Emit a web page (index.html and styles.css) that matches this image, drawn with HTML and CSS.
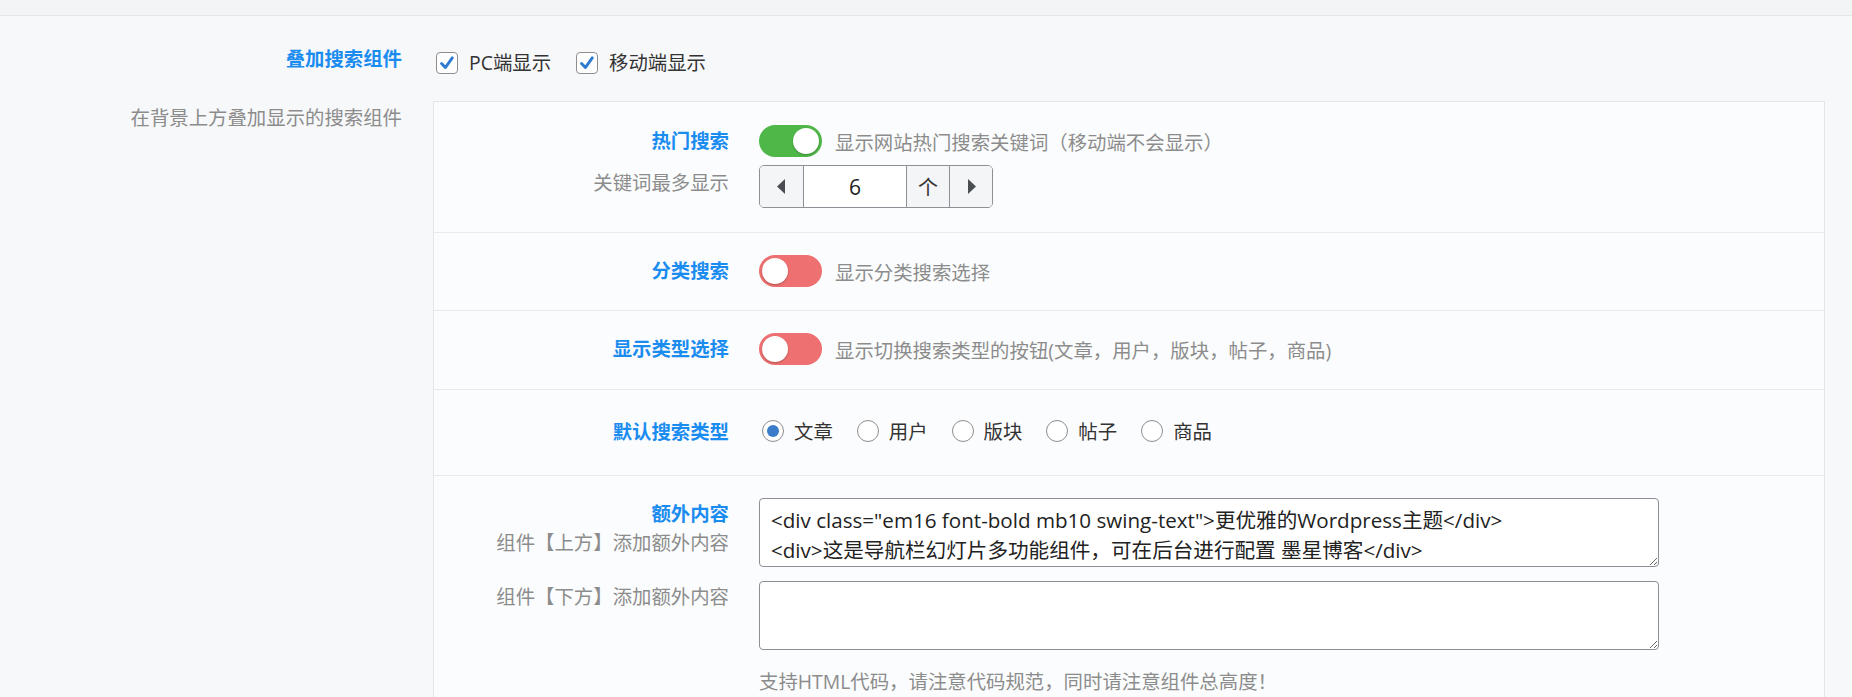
FILE: index.html
```html
<!DOCTYPE html>
<html lang="zh-CN">
<head>
<meta charset="utf-8">
<title>叠加搜索组件</title>
<link rel="stylesheet" href="styles.css">
</head>
<body>
<div class="topbar"></div>
<div class="field">
  <div class="field-title">
    <h4 class="title">叠加搜索组件</h4>
    <div class="subtitle">在背景上方叠加显示的搜索组件</div>
  </div>
  <div class="field-content">
    <div class="checks">
      <label class="check"><span class="cbox"><svg viewBox="0 0 22 22" width="22" height="22"><path d="M5 11.6 L9.2 16 L16.8 5.4" fill="none" stroke="#2f7bd1" stroke-width="3.2" stroke-linecap="round" stroke-linejoin="round"/></svg></span>PC端显示</label>
      <label class="check"><span class="cbox"><svg viewBox="0 0 22 22" width="22" height="22"><path d="M5 11.6 L9.2 16 L16.8 5.4" fill="none" stroke="#2f7bd1" stroke-width="3.2" stroke-linecap="round" stroke-linejoin="round"/></svg></span>移动端显示</label>
    </div>
    <div class="panel">
      <div class="row r1">
        <div class="rlabel"><h5 class="title">热门搜索</h5></div>
        <div class="rcontent line"><span class="switch on"><span class="knob"></span></span><span class="desc">显示网站热门搜索关键词（移动端不会显示）</span></div>
        <div class="rlabel"><div class="sublabel tall">关键词最多显示</div></div>
        <div class="rcontent">
          <div class="spinner">
            <span class="sbtn"><svg width="9" height="15" viewBox="0 0 9 15"><polygon points="8,0 8,15 0,7.5" fill="#4a4e53"/></svg></span>
            <span class="sval">6</span>
            <span class="sunit">个</span>
            <span class="sbtn last"><svg width="9" height="15" viewBox="0 0 9 15"><polygon points="1,0 1,15 9,7.5" fill="#4a4e53"/></svg></span>
          </div>
        </div>
      </div>
      <div class="row r2">
        <div class="rlabel"><h5 class="title">分类搜索</h5></div>
        <div class="rcontent line"><span class="switch off"><span class="knob"></span></span><span class="desc">显示分类搜索选择</span></div>
      </div>
      <div class="row r3">
        <div class="rlabel"><h5 class="title">显示类型选择</h5></div>
        <div class="rcontent line"><span class="switch off"><span class="knob"></span></span><span class="desc">显示切换搜索类型的按钮(文章，用户，版块，帖子，商品)</span></div>
      </div>
      <div class="row r4">
        <div class="rlabel"><h5 class="title radio-title">默认搜索类型</h5></div>
        <div class="rcontent radios">
          <label class="radio"><span class="rcircle checked"></span>文章</label>
          <label class="radio"><span class="rcircle"></span>用户</label>
          <label class="radio"><span class="rcircle"></span>版块</label>
          <label class="radio"><span class="rcircle"></span>帖子</label>
          <label class="radio"><span class="rcircle"></span>商品</label>
        </div>
      </div>
      <div class="row r5">
        <div class="rlabel">
          <h5 class="title">额外内容</h5>
          <div class="sublabel">组件【上方】添加额外内容</div>
        </div>
        <div class="rcontent">
          <textarea class="ta" spellcheck="false">&lt;div class="em16 font-bold mb10 swing-text"&gt;更优雅的Wordpress主题&lt;/div&gt;
&lt;div&gt;这是导航栏幻灯片多功能组件，可在后台进行配置 墨星博客&lt;/div&gt;</textarea>
        </div>
        <div class="rlabel"><div class="sublabel first">组件【下方】添加额外内容</div></div>
        <div class="rcontent">
          <textarea class="ta" spellcheck="false"></textarea>
          <div class="help">支持HTML代码，请注意代码规范，同时请注意组件总高度！</div>
        </div>
      </div>
    </div>
  </div>
</div>
</body>
</html>
```

FILE: styles.css
```css
* { box-sizing: border-box; }
html, body { margin: 0; padding: 0; }
body {
  background: #f7f8fa;
  font-family: "Open Sans", "Noto Sans CJK SC", sans-serif;
  font-size: 19.4px;
  color: #333;
  height: 697px;
  overflow: hidden;
}
.topbar {
  height: 16px;
  background: #f3f4f6;
  border-bottom: 1px solid #e4e6ea;
}
.field {
  display: grid;
  grid-template-columns: 402px 1fr;
  column-gap: 31px;
  padding: 28px 27px 0 0;
}
.field-title { text-align: right; }
.title {
  margin: 0;
  font-size: 19.4px;
  line-height: 30px;
  font-weight: bold;
  color: #1a8cf0;
}
.subtitle {
  margin-top: 29px;
  line-height: 30px;
  color: #8c8c8c;
}
.checks {
  display: flex;
  gap: 25px;
  margin-top: 4px;
  height: 30px;
  align-items: center;
}
.check {
  display: flex;
  align-items: center;
  gap: 11px;
  color: #333;
  line-height: 30px;
  margin-left: 3px;
}
.check + .check { margin-left: 0; }
.cbox {
  width: 22px;
  height: 22px;
  border: 1px solid #8e8e8e;
  border-radius: 4px;
  background: #fff;
  display: flex;
  align-items: center;
  justify-content: center;
}
.cbox svg { display: block; }
.panel {
  margin-top: 23px;
  background: #fbfcfd;
  border: 1px solid #e3e5e9;
  min-height: 700px;
}
.row {
  display: grid;
  grid-template-columns: 295px 1fr;
  column-gap: 30px;
  row-gap: 8px;
  padding: 22px 0 23px;
  border-top: 1px solid #e8eaed;
}
.row.r1 { border-top: none; padding-top: 23px; padding-bottom: 24px; }
.row.r3 { padding-bottom: 24px; }
.rlabel { text-align: right; }
.rlabel .title { line-height: 32px; }
.rlabel .radio-title { line-height: 40px; }
.sublabel {
  color: #8c8c8c;
  line-height: 26px;
}
.sublabel.tall { line-height: 36px; }
.sublabel.first { line-height: 32px; }
.line {
  display: flex;
  align-items: center;
  gap: 13px;
  height: 32px;
}
.desc { color: #8c8c8c; }
.switch {
  position: relative;
  display: inline-block;
  width: 63px;
  height: 32px;
  border-radius: 16px;
  flex: none;
}
.switch.on { background: #4fb748; }
.switch.off { background: #ee7070; }
.knob {
  position: absolute;
  top: 3px;
  width: 26px;
  height: 26px;
  border-radius: 50%;
  background: #fff;
  box-shadow: 0 1px 2px rgba(0,0,0,0.25);
}
.switch.on .knob { right: 3px; }
.switch.off .knob { left: 3px; }
.spinner {
  display: inline-flex;
  height: 43px;
  border: 1px solid #8d9096;
  border-radius: 5px;
  overflow: hidden;
  background: #fff;
  font-size: 21px;
}
.sbtn {
  width: 44px;
  display: flex;
  align-items: center;
  justify-content: center;
  background: #f4f5f6;
  border-right: 1px solid #8d9096;
}
.sbtn.last { border-right: none; width: 42px; }
.sval {
  width: 103px;
  display: flex;
  align-items: center;
  justify-content: center;
  color: #222;
  border-right: 1px solid #8d9096;
}
.sunit {
  width: 43px;
  display: flex;
  align-items: center;
  justify-content: center;
  color: #333;
  background: #f4f5f6;
  border-right: 1px solid #8d9096;
  font-size: 20px;
}
.radios {
  display: flex;
  align-items: center;
  height: 40px;
  gap: 24px;
  padding-left: 3px;
  padding-bottom: 3px;
}
.radio {
  display: flex;
  align-items: center;
  gap: 10px;
  color: #333;
}
.rcircle {
  width: 22px;
  height: 22px;
  border: 1px solid #8e8e8e;
  border-radius: 50%;
  background: #fff;
  position: relative;
}
.rcircle.checked::after {
  content: "";
  position: absolute;
  left: 4px;
  top: 4px;
  width: 12px;
  height: 12px;
  border-radius: 50%;
  background: #3a7cc9;
}
.ta {
  display: block;
  width: 900px;
  height: 69px;
  border: 1px solid #8c8f94;
  border-radius: 4px;
  background: #fff;
  padding: 6px 11px;
  font-family: "Open Sans", "Noto Sans CJK SC", sans-serif;
  font-size: 20.6px;
  line-height: 30px;
  color: #222;
  overflow: hidden;
  margin: 0 0 6px;
}
.row .rcontent .ta + .help { margin-top: 17px; }
.help {
  color: #8c8c8c;
  line-height: 30px;
}
```
